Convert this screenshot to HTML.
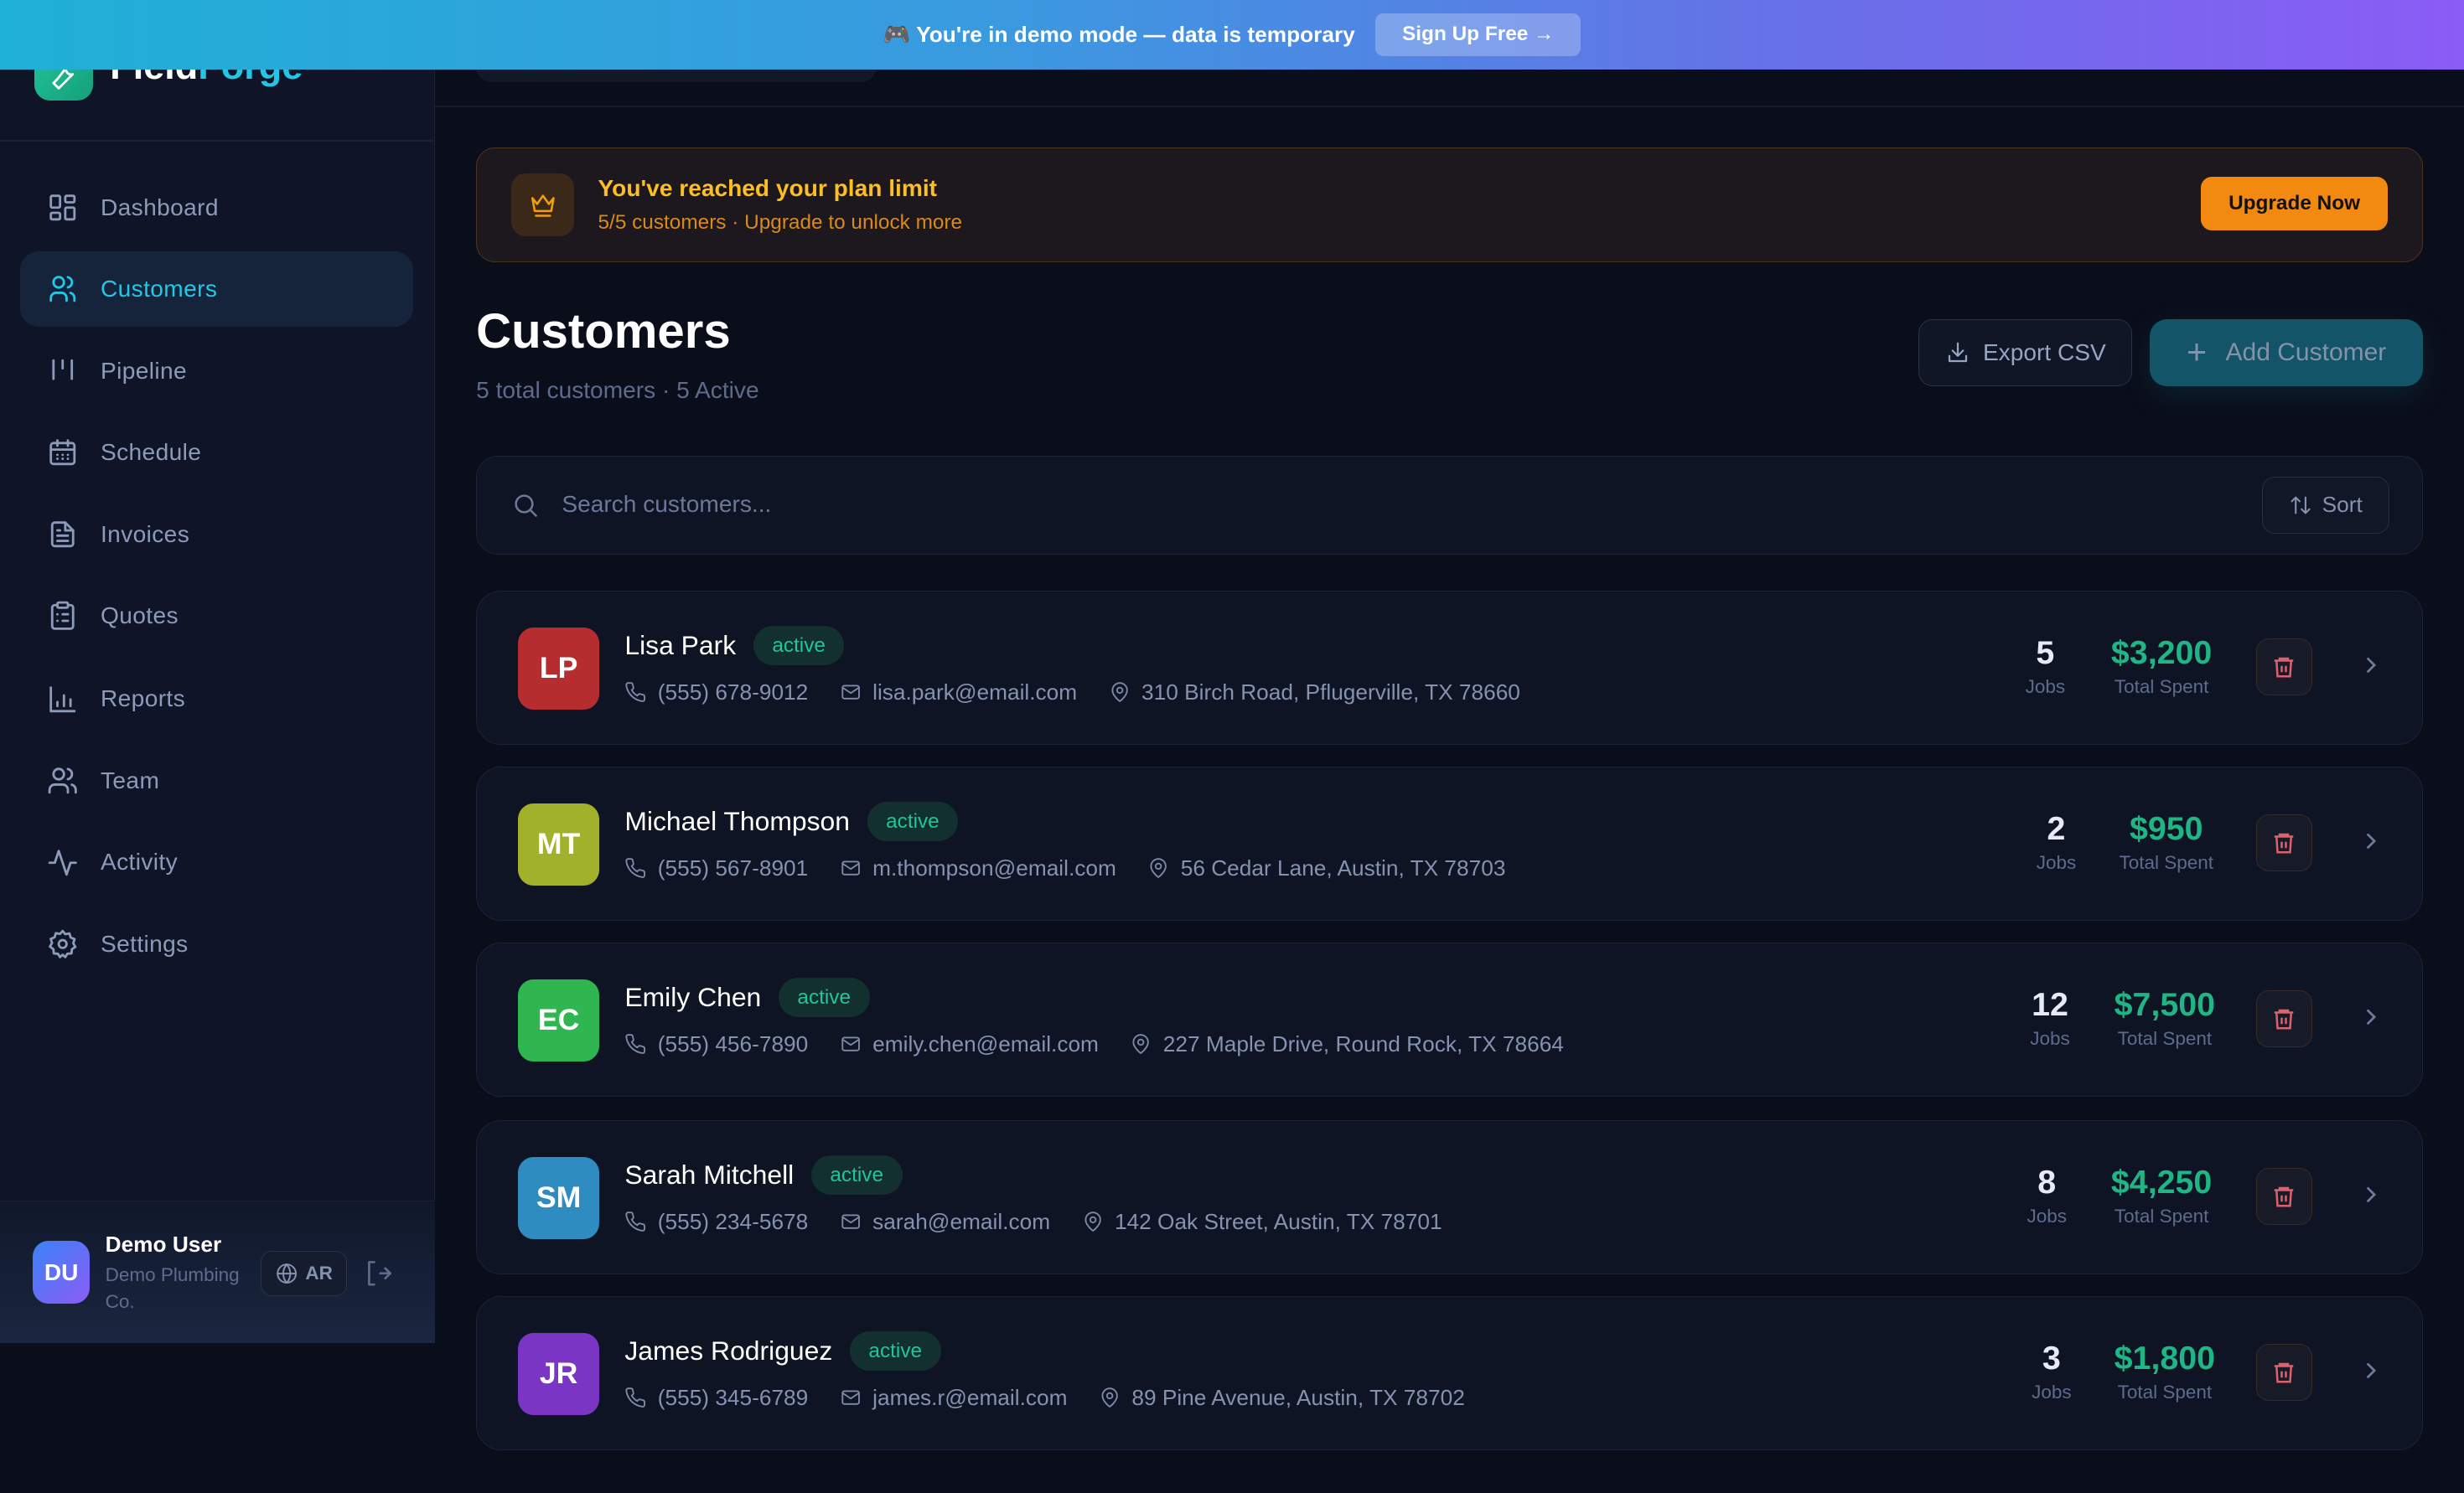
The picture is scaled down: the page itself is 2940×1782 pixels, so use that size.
<!DOCTYPE html>
<html><head><meta charset="utf-8"><style>
*{box-sizing:border-box;margin:0;padding:0}
html,body{width:2940px;height:1782px;overflow:hidden;background:#0a0e1a}
#z{zoom:1.875;width:1568px;height:950px;position:relative;font-family:"Liberation Sans",sans-serif;color:#e6ebf5;background:#0a0e1a}
.a{position:absolute}
svg{display:block}
.side{left:0;top:0;width:277px;height:855px;background:#0f1527;border-right:1px solid #1b2236}
.nav{left:13px;width:250px;height:48px;border-radius:12px;display:flex;align-items:center;padding-left:17px;font-size:15px;color:#8d9bbb;letter-spacing:.2px}
.nav svg{margin-right:14px}
.nav.on{background:#15243a;color:#22c7e6}
.ic{width:20px;height:20px;fill:none;stroke:currentColor;stroke-width:1.8;stroke-linecap:round;stroke-linejoin:round}
.card{left:303px;width:1239px;height:98px;background:#0e1424;border:1px solid #1c2336;border-radius:16px}
.av{left:26px;top:23px;width:52px;height:52px;border-radius:10px;color:#fff;font-weight:bold;font-size:19px;display:flex;align-items:center;justify-content:center}
.nm{left:94px;top:22px;font-size:17px;color:#fff;display:flex;align-items:center;white-space:nowrap}
.badge{margin-left:11px;background:#12302e;color:#22c49a;font-size:13px;padding:5px 12px;border-radius:13px}
.info{left:94px;top:56px;font-size:14px;color:#8592b0;display:flex;align-items:center;white-space:nowrap}
.info svg{width:14px;height:14px;margin-right:7px;stroke:#7d8aa8;fill:none;stroke-width:1.7;stroke-linecap:round;stroke-linejoin:round}
.info span{margin-right:20px}
.st{text-align:center;top:26px}
.st b{display:block;font-size:21px;line-height:26px}
.st i{display:block;font-style:normal;font-size:12px;color:#5d6b8c;margin-top:2px}
.del{left:1132px;top:30px;width:36px;height:36px;border:1px solid #3a2a28;background:#171a27;border-radius:8px;display:flex;align-items:center;justify-content:center}
.chev{left:1196px;top:38px;color:#6d7ba0}
</style></head><body><div id="z">

<!-- sidebar -->
<div class="a side">
  <div class="a" style="left:22px;top:20px;width:37px;height:44px;border-radius:10px;background:linear-gradient(135deg,#22c7a0,#16a078)"><svg class="ic" style="position:absolute;left:8px;top:18px;width:20px;height:20px;color:#fff" viewBox="0 0 24 24"><path d="M14.7 6.3a4 4 0 0 0 5 5L12 19l-3 3-4-4 3-3z"/></svg></div>
  <div class="a" style="left:70px;top:28px;font-size:24px;font-weight:bold;color:#fff">Field<span style="color:#22c7e6">Forge</span></div>
  <div class="a" style="left:0;top:89px;width:277px;height:1px;background:#1b2236"></div>

  <div class="a nav" style="top:108px"><svg class="ic" viewBox="0 0 24 24"><rect x="3" y="3" width="7" height="9" rx="1"/><rect x="14" y="3" width="7" height="5" rx="1"/><rect x="14" y="12" width="7" height="9" rx="1"/><rect x="3" y="16" width="7" height="5" rx="1"/></svg>Dashboard</div>
  <div class="a nav on" style="top:160px"><svg class="ic" viewBox="0 0 24 24"><circle cx="9" cy="7" r="4"/><path d="M3 21v-2a4 4 0 0 1 4-4h4a4 4 0 0 1 4 4v2M16 3.1a4 4 0 0 1 0 7.8M21 21v-2a4 4 0 0 0-3-3.9"/></svg>Customers</div>
  <div class="a nav" style="top:212px"><svg class="ic" viewBox="0 0 24 24"><path d="M5 4v14M12 4v6M19 4v14"/></svg>Pipeline</div>
  <div class="a nav" style="top:264px"><svg class="ic" viewBox="0 0 24 24"><rect x="3" y="5" width="18" height="16" rx="2"/><path d="M3 10h18M8 3v4M16 3v4M8 14h.01M12 14h.01M16 14h.01M8 17h.01M12 17h.01M16 17h.01"/></svg>Schedule</div>
  <div class="a nav" style="top:316px"><svg class="ic" viewBox="0 0 24 24"><path d="M14 3H6a2 2 0 0 0-2 2v14a2 2 0 0 0 2 2h12a2 2 0 0 0 2-2V9z"/><path d="M14 3v6h6M8 13h8M8 17h8M8 9h2"/></svg>Invoices</div>
  <div class="a nav" style="top:368px"><svg class="ic" viewBox="0 0 24 24"><rect x="8" y="2" width="8" height="4" rx="1"/><path d="M16 4h2a2 2 0 0 1 2 2v14a2 2 0 0 1-2 2H6a2 2 0 0 1-2-2V6a2 2 0 0 1 2-2h2M12 11h4M12 16h4M8 11h.01M8 16h.01"/></svg>Quotes</div>
  <div class="a nav" style="top:421px"><svg class="ic" viewBox="0 0 24 24"><path d="M3 3v18h18M8 17v-3M13 17V9M18 17v-5"/></svg>Reports</div>
  <div class="a nav" style="top:473px"><svg class="ic" viewBox="0 0 24 24"><circle cx="9" cy="7" r="4"/><path d="M2 21v-2a4 4 0 0 1 4-4h6a4 4 0 0 1 4 4v2M16 3.1a4 4 0 0 1 0 7.8M22 21v-2a4 4 0 0 0-3-3.9"/></svg>Team</div>
  <div class="a nav" style="top:525px"><svg class="ic" viewBox="0 0 24 24"><path d="M22 12h-4l-3 9L9 3l-3 9H2"/></svg>Activity</div>
  <div class="a nav" style="top:577px"><svg class="ic" viewBox="0 0 24 24"><circle cx="12" cy="12" r="3"/><path d="M12 2l2 2.5 3.2-.6.9 3.1 3 1.3-1 3.1 1.6 2.8-2.7 1.8-.2 3.2-3.2.2L14 22l-2-1.8L10 22l-1.6-2.6-3.2-.2-.2-3.2L2.3 14l1.6-2.8-1-3.1 3-1.3.9-3.1 3.2.6z"/></svg>Settings</div>

  <div class="a" style="left:0;top:764px;width:277px;height:1px;background:#1b2236"></div>
  <div class="a" style="left:0;top:765px;width:277px;height:90px;background:linear-gradient(180deg,#10172a,#1a2740)"></div>
  <div class="a" style="left:21px;top:790px;width:36px;height:40px;border-radius:10px;background:linear-gradient(135deg,#3b82f6,#8b5cf6);color:#fff;font-weight:bold;font-size:15px;display:flex;align-items:center;justify-content:center">DU</div>
  <div class="a" style="left:67px;top:784px;font-size:14px;font-weight:bold;color:#fff">Demo User</div>
  <div class="a" style="left:67px;top:803px;font-size:12px;line-height:17px;color:#5e6d8e;width:95px">Demo Plumbing Co.</div>
  <div class="a" style="left:166px;top:796px;width:55px;height:29px;border:1px solid #2a3348;background:#151c2e;border-radius:7px;display:flex;align-items:center;justify-content:center;font-size:12px;font-weight:bold;color:#8592b0"><svg class="ic" style="width:14px;height:14px;margin-right:5px" viewBox="0 0 24 24"><circle cx="12" cy="12" r="10"/><path d="M2 12h20M12 2a15 15 0 0 1 0 20M12 2a15 15 0 0 0 0 20"/></svg>AR</div>
  <svg class="a ic" style="left:231px;top:801px;width:19px;height:19px;color:#5e6d8e" viewBox="0 0 24 24"><path d="M9 3H5v18h4M14 12h8M18 8l4 4-4 4"/></svg>
</div>

<!-- main -->
<div class="a" style="left:277px;top:67px;width:1291px;height:1px;background:#161c2c"></div>
<div class="a" style="left:303px;top:40px;width:255px;height:12px;background:#121828;border-radius:0 0 10px 10px"></div>

<!-- plan limit -->
<div class="a" style="left:303px;top:94px;width:1239px;height:73px;background:#1c181d;border:1px solid #4a3420;border-radius:12px">
  <div class="a" style="left:22px;top:16px;width:40px;height:40px;border-radius:9px;background:#3a2818;display:flex;align-items:center;justify-content:center"><svg class="ic" style="color:#f59e0b;width:18px;height:18px" viewBox="0 0 24 24"><path d="M3 6l4 5 5-7 5 7 4-5-2 11H5zM6 21h12"/></svg></div>
  <div class="a" style="left:77px;top:17px;font-size:15px;font-weight:bold;color:#fbbf24">You've reached your plan limit</div>
  <div class="a" style="left:77px;top:40px;font-size:13px;color:#d98a1c">5/5 customers · Upgrade to unlock more</div>
  <div class="a" style="left:1097px;top:18px;width:119px;height:34px;border-radius:7px;background:#f28a12;color:#111;font-size:13px;font-weight:bold;display:flex;align-items:center;justify-content:center">Upgrade Now</div>
</div>

<div class="a" style="left:303px;top:193px;font-size:31px;font-weight:900;color:#fff">Customers</div>
<div class="a" style="left:303px;top:240px;font-size:15px;color:#5d6b8c">5 total customers · 5 Active</div>

<div class="a" style="left:1221px;top:203px;width:136px;height:43px;border:1px solid #2a3246;background:#111626;border-radius:9px;display:flex;align-items:center;justify-content:center;font-size:15px;color:#97a5c4"><svg class="ic" style="width:16px;height:16px;margin-right:8px" viewBox="0 0 24 24"><path d="M12 3v12M7 10l5 5 5-5M4 15v5h16v-5"/></svg>Export CSV</div>
<div class="a" style="left:1368px;top:203px;width:174px;height:43px;background:#135468;border-radius:11px;display:flex;align-items:center;justify-content:center;font-size:16px;color:#8592a8;box-shadow:0 6px 18px rgba(20,90,110,.25)"><span style="font-size:22px;margin-right:12px;font-weight:300">+</span>Add Customer</div>

<!-- search -->
<div class="a" style="left:303px;top:290px;width:1239px;height:63px;background:#0e1424;border:1px solid #1c2336;border-radius:14px">
  <svg class="a ic" style="left:22px;top:22px;width:18px;height:18px;color:#6b7898" viewBox="0 0 24 24"><circle cx="11" cy="11" r="7"/><path d="M21 21l-5-5"/></svg>
  <div class="a" style="left:54px;top:22px;font-size:15px;color:#6b7898">Search customers...</div>
  <div class="a" style="left:1136px;top:13px;width:81px;height:36px;border:1px solid #262e42;background:#111727;border-radius:8px;display:flex;align-items:center;justify-content:center;font-size:14px;color:#8592b0"><svg class="ic" style="width:15px;height:15px;margin-right:6px" viewBox="0 0 24 24"><path d="M7 20V4M3 8l4-4 4 4M17 4v16M13 16l4 4 4-4"/></svg>Sort</div>
</div>

<!-- cards -->
<svg width="0" height="0" style="position:absolute"><defs>
<symbol id="ph" viewBox="0 0 24 24"><path d="M22 16.9v3a2 2 0 0 1-2.2 2 19.8 19.8 0 0 1-8.6-3.1 19.5 19.5 0 0 1-6-6A19.8 19.8 0 0 1 2.1 4.2 2 2 0 0 1 4.1 2h3a2 2 0 0 1 2 1.7c.1 1 .4 1.9.7 2.8a2 2 0 0 1-.5 2.1L8 9.8a16 16 0 0 0 6 6l1.3-1.3a2 2 0 0 1 2.1-.4c.9.3 1.8.6 2.8.7a2 2 0 0 1 1.7 2z"/></symbol>
<symbol id="ml" viewBox="0 0 24 24"><rect x="3" y="5" width="18" height="14" rx="2"/><path d="M3 7l9 6 9-6"/></symbol>
<symbol id="pn" viewBox="0 0 24 24"><path d="M20 10c0 6-8 12-8 12s-8-6-8-12a8 8 0 0 1 16 0z"/><circle cx="12" cy="10" r="3"/></symbol>
<symbol id="tr" viewBox="0 0 24 24"><path d="M3 6h18M8 6V4h8v2M5 6l1 15h12l1-15M10 11v6M14 11v6"/></symbol>
<symbol id="cv" viewBox="0 0 24 24"><path d="M9 6l6 6-6 6"/></symbol>
</defs></svg>

<div class="a card" style="top:376px">
  <div class="a av" style="background:#b52d2f">LP</div>
  <div class="a nm">Lisa Park<span class="badge">active</span></div>
  <div class="a info"><svg><use href="#ph"/></svg><span>(555) 678-9012</span><svg><use href="#ml"/></svg><span>lisa.park@email.com</span><svg><use href="#pn"/></svg><span>310 Birch Road, Pflugerville, TX 78660</span></div>
  <div class="a st" style="left:983px;width:30px"><b>5</b><i>Jobs</i></div>
  <div class="a st" style="left:1034px;width:76px"><b style="color:#1fb585">$3,200</b><i>Total Spent</i></div>
  <div class="a del"><svg style="width:16px;height:16px;fill:none;stroke:#e0606e;stroke-width:2"><use href="#tr"/></svg></div>
  <svg class="a chev" style="width:18px;height:18px;fill:none;stroke:currentColor;stroke-width:2"><use href="#cv"/></svg>
</div>
<div class="a card" style="top:488px">
  <div class="a av" style="background:#a2b12c">MT</div>
  <div class="a nm">Michael Thompson<span class="badge">active</span></div>
  <div class="a info"><svg><use href="#ph"/></svg><span>(555) 567-8901</span><svg><use href="#ml"/></svg><span>m.thompson@email.com</span><svg><use href="#pn"/></svg><span>56 Cedar Lane, Austin, TX 78703</span></div>
  <div class="a st" style="left:990px;width:30px"><b>2</b><i>Jobs</i></div>
  <div class="a st" style="left:1040px;width:70px"><b style="color:#1fb585">$950</b><i>Total Spent</i></div>
  <div class="a del"><svg style="width:16px;height:16px;fill:none;stroke:#e0606e;stroke-width:2"><use href="#tr"/></svg></div>
  <svg class="a chev" style="width:18px;height:18px;fill:none;stroke:currentColor;stroke-width:2"><use href="#cv"/></svg>
</div>
<div class="a card" style="top:600px">
  <div class="a av" style="background:#2fb650">EC</div>
  <div class="a nm">Emily Chen<span class="badge">active</span></div>
  <div class="a info"><svg><use href="#ph"/></svg><span>(555) 456-7890</span><svg><use href="#ml"/></svg><span>emily.chen@email.com</span><svg><use href="#pn"/></svg><span>227 Maple Drive, Round Rock, TX 78664</span></div>
  <div class="a st" style="left:984px;width:34px"><b>12</b><i>Jobs</i></div>
  <div class="a st" style="left:1036px;width:76px"><b style="color:#1fb585">$7,500</b><i>Total Spent</i></div>
  <div class="a del"><svg style="width:16px;height:16px;fill:none;stroke:#e0606e;stroke-width:2"><use href="#tr"/></svg></div>
  <svg class="a chev" style="width:18px;height:18px;fill:none;stroke:currentColor;stroke-width:2"><use href="#cv"/></svg>
</div>
<div class="a card" style="top:713px">
  <div class="a av" style="background:#2f8cc0">SM</div>
  <div class="a nm">Sarah Mitchell<span class="badge">active</span></div>
  <div class="a info"><svg><use href="#ph"/></svg><span>(555) 234-5678</span><svg><use href="#ml"/></svg><span>sarah@email.com</span><svg><use href="#pn"/></svg><span>142 Oak Street, Austin, TX 78701</span></div>
  <div class="a st" style="left:984px;width:30px"><b>8</b><i>Jobs</i></div>
  <div class="a st" style="left:1034px;width:76px"><b style="color:#1fb585">$4,250</b><i>Total Spent</i></div>
  <div class="a del"><svg style="width:16px;height:16px;fill:none;stroke:#e0606e;stroke-width:2"><use href="#tr"/></svg></div>
  <svg class="a chev" style="width:18px;height:18px;fill:none;stroke:currentColor;stroke-width:2"><use href="#cv"/></svg>
</div>
<div class="a card" style="top:825px">
  <div class="a av" style="background:#7b35c4">JR</div>
  <div class="a nm">James Rodriguez<span class="badge">active</span></div>
  <div class="a info"><svg><use href="#ph"/></svg><span>(555) 345-6789</span><svg><use href="#ml"/></svg><span>james.r@email.com</span><svg><use href="#pn"/></svg><span>89 Pine Avenue, Austin, TX 78702</span></div>
  <div class="a st" style="left:987px;width:30px"><b>3</b><i>Jobs</i></div>
  <div class="a st" style="left:1036px;width:76px"><b style="color:#1fb585">$1,800</b><i>Total Spent</i></div>
  <div class="a del"><svg style="width:16px;height:16px;fill:none;stroke:#e0606e;stroke-width:2"><use href="#tr"/></svg></div>
  <svg class="a chev" style="width:18px;height:18px;fill:none;stroke:currentColor;stroke-width:2"><use href="#cv"/></svg>
</div>

<!-- demo banner -->
<div class="a" style="left:0;top:0;width:1568px;height:44px;background:linear-gradient(90deg,#1fb0d6 0%,#3a9ae0 40%,#6a6ee8 75%,#8b5cf6 100%);display:flex;align-items:center;justify-content:center">
  <span style="font-size:14px;color:#fff;font-weight:bold">🎮 You're in demo mode — data is temporary</span>
  <span style="margin-left:13px;background:rgba(255,255,255,.25);border-radius:5px;padding:6px 17px;font-size:13px;font-weight:bold;color:#fff">Sign Up Free →</span>
</div>

</div></body></html>
